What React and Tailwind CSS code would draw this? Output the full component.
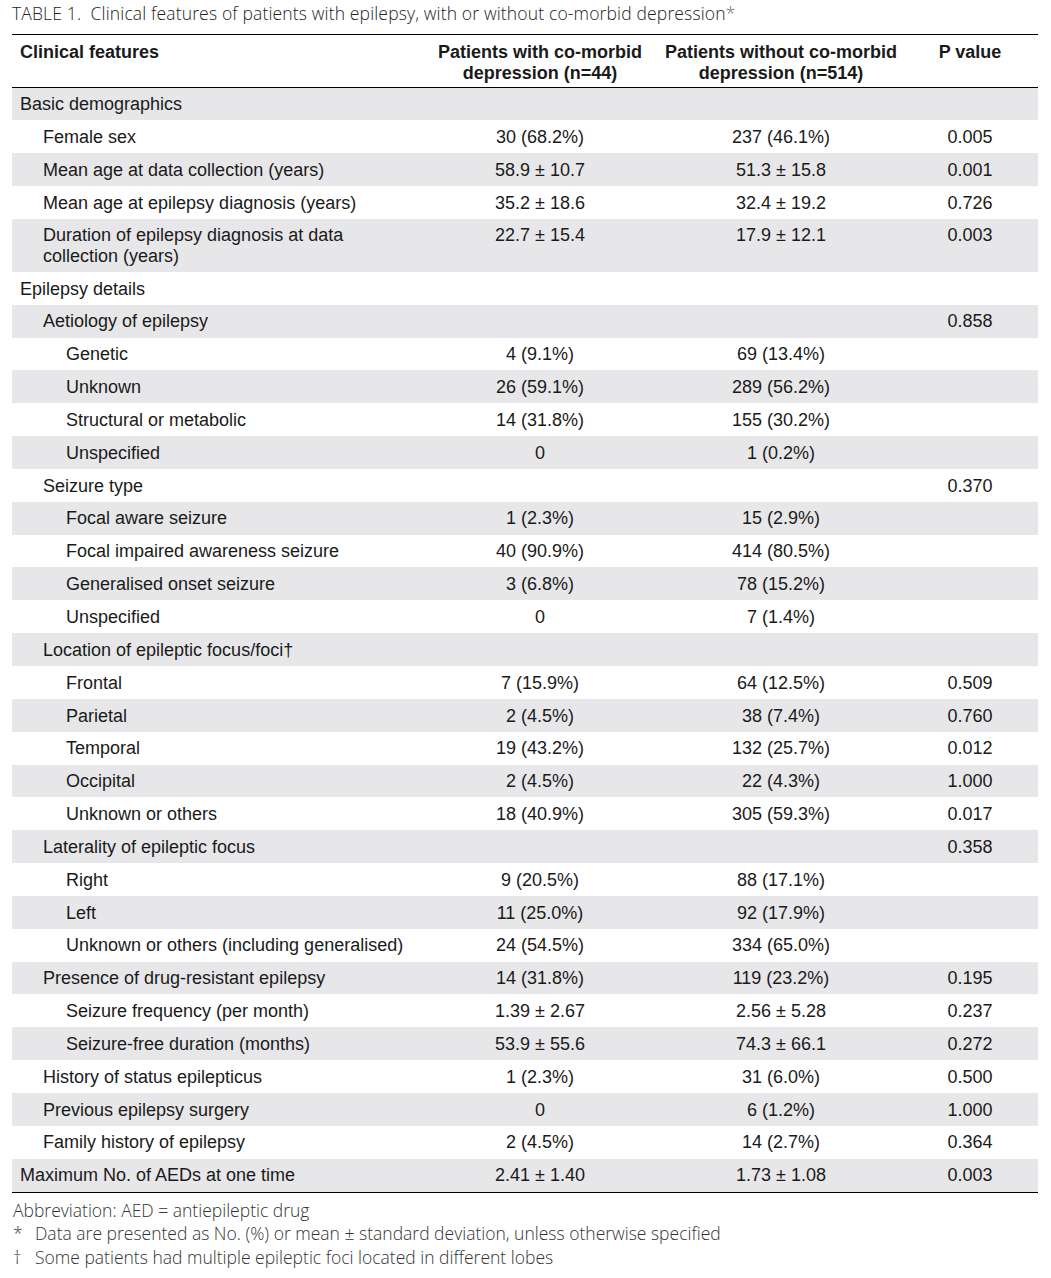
import React from "react";

const rows = [
  { label: "Basic demographics", level: 0 },
  { label: "Female sex", level: 1, a: "30 (68.2%)", b: "237 (46.1%)", p: "0.005" },
  { label: "Mean age at data collection (years)", level: 1, a: "58.9 ± 10.7", b: "51.3 ± 15.8", p: "0.001" },
  { label: "Mean age at epilepsy diagnosis (years)", level: 1, a: "35.2 ± 18.6", b: "32.4 ± 19.2", p: "0.726" },
  {
    label: ["Duration of epilepsy diagnosis at data", "collection (years)"],
    level: 1,
    a: "22.7 ± 15.4",
    b: "17.9 ± 12.1",
    p: "0.003",
    tall: true,
  },
  { label: "Epilepsy details", level: 0 },
  { label: "Aetiology of epilepsy", level: 1, p: "0.858" },
  { label: "Genetic", level: 2, a: "4 (9.1%)", b: "69 (13.4%)" },
  { label: "Unknown", level: 2, a: "26 (59.1%)", b: "289 (56.2%)" },
  { label: "Structural or metabolic", level: 2, a: "14 (31.8%)", b: "155 (30.2%)" },
  { label: "Unspecified", level: 2, a: "0", b: "1 (0.2%)" },
  { label: "Seizure type", level: 1, p: "0.370" },
  { label: "Focal aware seizure", level: 2, a: "1 (2.3%)", b: "15 (2.9%)" },
  { label: "Focal impaired awareness seizure", level: 2, a: "40 (90.9%)", b: "414 (80.5%)" },
  { label: "Generalised onset seizure", level: 2, a: "3 (6.8%)", b: "78 (15.2%)" },
  { label: "Unspecified", level: 2, a: "0", b: "7 (1.4%)" },
  { label: "Location of epileptic focus/foci†", level: 1 },
  { label: "Frontal", level: 2, a: "7 (15.9%)", b: "64 (12.5%)", p: "0.509" },
  { label: "Parietal", level: 2, a: "2 (4.5%)", b: "38 (7.4%)", p: "0.760" },
  { label: "Temporal", level: 2, a: "19 (43.2%)", b: "132 (25.7%)", p: "0.012" },
  { label: "Occipital", level: 2, a: "2 (4.5%)", b: "22 (4.3%)", p: "1.000" },
  { label: "Unknown or others", level: 2, a: "18 (40.9%)", b: "305 (59.3%)", p: "0.017" },
  { label: "Laterality of epileptic focus", level: 1, p: "0.358" },
  { label: "Right", level: 2, a: "9 (20.5%)", b: "88 (17.1%)" },
  { label: "Left", level: 2, a: "11 (25.0%)", b: "92 (17.9%)" },
  { label: "Unknown or others (including generalised)", level: 2, a: "24 (54.5%)", b: "334 (65.0%)" },
  { label: "Presence of drug-resistant epilepsy", level: 1, a: "14 (31.8%)", b: "119 (23.2%)", p: "0.195" },
  { label: "Seizure frequency (per month)", level: 2, a: "1.39 ± 2.67", b: "2.56 ± 5.28", p: "0.237" },
  { label: "Seizure-free duration (months)", level: 2, a: "53.9 ± 55.6", b: "74.3 ± 66.1", p: "0.272" },
  { label: "History of status epilepticus", level: 1, a: "1 (2.3%)", b: "31 (6.0%)", p: "0.500" },
  { label: "Previous epilepsy surgery", level: 1, a: "0", b: "6 (1.2%)", p: "1.000" },
  { label: "Family history of epilepsy", level: 1, a: "2 (4.5%)", b: "14 (2.7%)", p: "0.364" },
  { label: "Maximum No. of AEDs at one time", level: 0, a: "2.41 ± 1.40", b: "1.73 ± 1.08", p: "0.003" },
];

const indent = ["pl-[8px]", "pl-[31px]", "pl-[54px]"];

const Row = ({ row, index }) => {
  const shaded = index % 2 === 0 ? "bg-[#e7e7e9]" : "bg-white";
  const height = row.tall ? "h-[53px] items-start pt-[6.5px]" : "h-[32.85px] items-center pt-[1.5px]";
  return (
    <div className={`flex ${height} ${shaded}`}>
      <div className={`w-[408px] ${indent[row.level]}`}>
        {Array.isArray(row.label)
          ? row.label.map((l) => <div key={l}>{l}</div>)
          : row.label}
      </div>
      <div className="w-[240px] text-center">{row.a}</div>
      <div className="w-[242px] text-center">{row.b}</div>
      <div className="w-[136px] text-center">{row.p}</div>
    </div>
  );
};

const App = () => {
  return (
    <div className="w-[1051px] h-[1278px] bg-white pl-[12px] pt-[3px]">
      <div className="font-['Open_Sans','Lato',sans-serif] text-[17.5px] leading-[20px] tracking-[0.15px] text-[#222] font-light">
        TABLE 1.&nbsp; Clinical features of patients with epilepsy, with or without co-morbid depression
        <span className="text-[#666]">*</span>
      </div>

      <div className="mt-[11px] w-[1026px] font-['Liberation_Sans',Arial,sans-serif] text-[18px] leading-[21px] text-[#1a1a1a]">
        {/* Header */}
        <div className="flex border-t-[1.5px] border-b-[1.5px] border-black pt-[7px] pb-[2.5px] font-bold">
          <div className="w-[408px] pl-[8px]">Clinical features</div>
          <div className="w-[240px] text-center">
            <div>Patients with co-morbid</div>
            <div>depression (n=44)</div>
          </div>
          <div className="w-[242px] text-center">
            <div>Patients without co-morbid</div>
            <div>depression (n=514)</div>
          </div>
          <div className="w-[136px] text-center">P value</div>
        </div>

        {/* Body */}
        <div className="border-b-[1.5px] border-black">
          {rows.map((row, i) => (
            <Row key={i} row={row} index={i} />
          ))}
        </div>
      </div>

      {/* Footnotes */}
      <div className="pt-[6px] pl-[1px] font-['Open_Sans','Lato',sans-serif] text-[17.5px] leading-[23.5px] text-[#333] font-light">
        <div>Abbreviation: AED = antiepileptic drug</div>
        <div className="flex">
          <span className="w-[22px]">*</span>
          <span>Data are presented as No. (%) or mean ± standard deviation, unless otherwise specified</span>
        </div>
        <div className="flex">
          <span className="w-[22px]">†</span>
          <span>Some patients had multiple epileptic foci located in different lobes</span>
        </div>
      </div>
    </div>
  );
};

export default App;
